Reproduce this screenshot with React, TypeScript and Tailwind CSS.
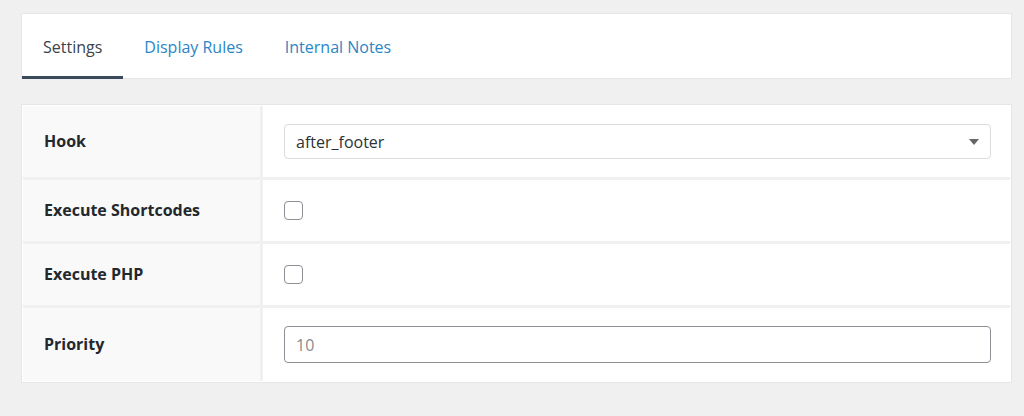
const font = { fontFamily: '"Open Sans", "Noto Sans", sans-serif' };

function Tabs() {
  const tabs = ["Settings", "Display Rules", "Internal Notes"];
  return (
    <div className="ml-[21px] mr-[12px] mt-[13px] h-[66px] bg-white border border-[#e6e6e6] flex">
      {tabs.map((t, i) => (
        <div
          key={t}
          className={
            "px-[21px] pt-[3px] flex items-center text-[16px] border-b-[3px] -mb-px " +
            (i === 0 ? "text-[#3c434a] border-[#3b4a5a]" : "text-[#2b86c5] border-transparent")
          }
        >
          {t}
        </div>
      ))}
    </div>
  );
}

function Row({ label, children }: { label: string; children: React.ReactNode }) {
  return (
    <>
      <div className="bg-[#f9f9f9] px-[21px] py-[20px] flex items-center text-[16px] leading-[21px] font-bold text-[#23282d]">
        {label}
      </div>
      <div className="bg-white pl-[21px] pr-[19px] py-[18px] flex items-center">{children}</div>
    </>
  );
}

function Checkbox() {
  return <div className="w-[19px] h-[19px] rounded-[4px] border-[1.5px] border-[#8c8f94] bg-white" />;
}

export default function App() {
  return (
    <div className="w-[1024px] h-[416px] bg-[#f0f0f0] overflow-hidden" style={font}>
      <Tabs />
      <div className="ml-[21px] mr-[12px] mt-[25px] bg-white border border-[#e6e6e6] p-px">
        <div className="grid grid-cols-[237px_1fr] gap-[3px] bg-[#f0f0f1]">
          <Row label="Hook">
            <div className="w-full h-[35px] border border-[#dcdcde] rounded-[4px] bg-white flex items-center justify-between pl-[11px] pr-[11px] text-[16px] text-[#2c3338]">
              <span>after_footer</span>
              <svg width="10" height="6" viewBox="0 0 10 6">
                <path d="M0 0h10L5 6z" fill="#666" />
              </svg>
            </div>
          </Row>
          <Row label="Execute Shortcodes">
            <Checkbox />
          </Row>
          <Row label="Execute PHP">
            <Checkbox />
          </Row>
          <Row label="Priority">
            <div className="w-full h-[37px] border-[1.5px] border-[#8c8f94] rounded-[4px] bg-white flex items-center pl-[11px] text-[16px] text-[#8a8a8a]">
              10
            </div>
          </Row>
        </div>
      </div>
    </div>
  );
}
